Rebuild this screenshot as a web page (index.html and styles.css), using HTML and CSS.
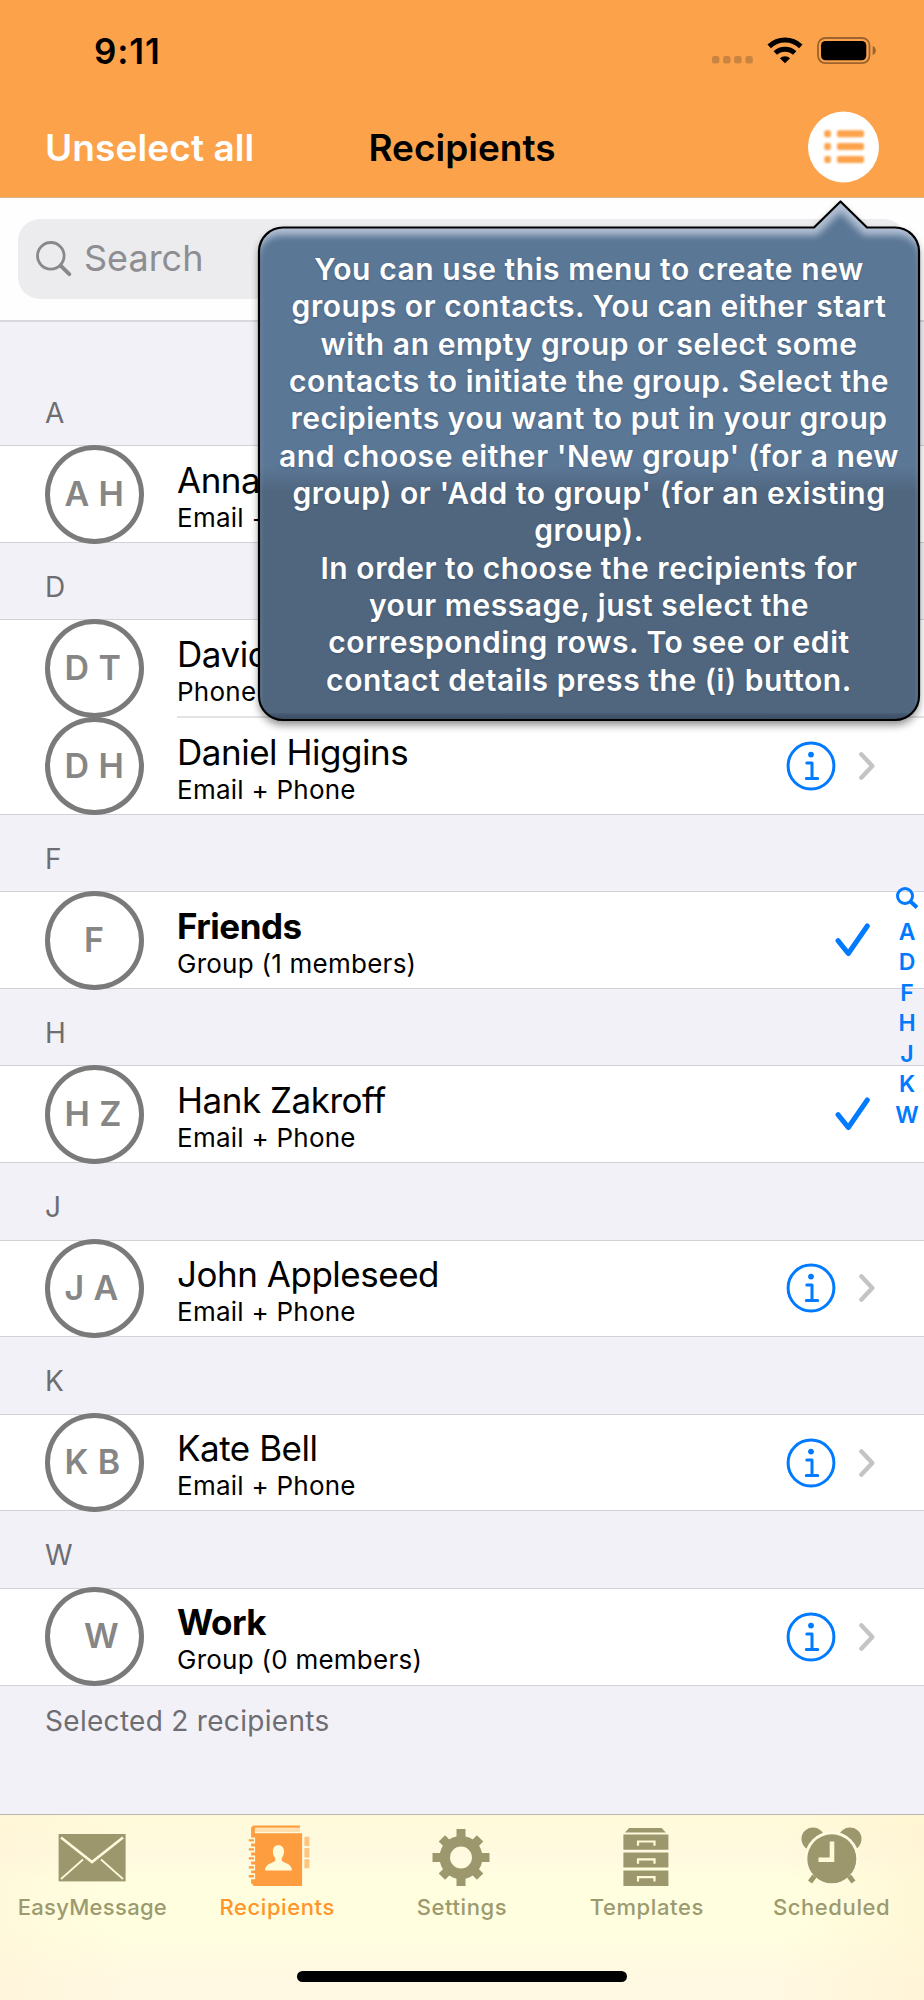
FILE: index.html
```html
<!DOCTYPE html>
<html lang="en">
<head>
<meta charset="utf-8">
<title>Recipients</title>
<link rel="stylesheet" href="styles.css">
</head>
<body>
<svg class="defs" width="0" height="0" aria-hidden="true">
  <symbol id="info" viewBox="0 0 50 50"><circle cx="25" cy="25" r="22.9" fill="none" stroke="#007aff" stroke-width="3"/><circle cx="25" cy="13.6" r="2.9" fill="#007aff"/><path d="M20.8 22H26v15.4M20.3 37.4h11.4" fill="none" stroke="#007aff" stroke-width="3" stroke-linecap="round" stroke-linejoin="round"/></symbol>
  <symbol id="chevron" viewBox="0 0 18 30"><path d="M3.3 3.3L14.3 15L3.3 26.7" fill="none" stroke="#c4c4c6" stroke-width="4.4" stroke-linecap="round" stroke-linejoin="round"/></symbol>
  <symbol id="check" viewBox="0 0 36 34"><path d="M3 17.6L13.3 30.5L32.3 3" fill="none" stroke="#007aff" stroke-width="5" stroke-linecap="round" stroke-linejoin="round"/></symbol>
</svg>
<div class="screen">
  <header class="top">
    <div class="status">
      <span class="time">9:11</span>
      <div class="signals">
        <svg class="dots" width="41" height="8" viewBox="0 0 41 8" fill="#c98540"><rect width="7.4" height="7.4" rx="2.2"/><rect x="11.1" width="7.4" height="7.4" rx="2.2"/><rect x="22.2" width="7.4" height="7.4" rx="2.2"/><rect x="33.4" width="7.4" height="7.4" rx="2.2"/></svg>
        <svg class="wifi" width="36" height="27" viewBox="0 0 36 27"><g fill="none" stroke="#000" stroke-width="5"><path d="M2.2 9.4A23 23 0 0 1 33.8 9.4"/><path d="M8.3 16A14.3 14.3 0 0 1 27.7 16"/></g><path d="M18 26.2L12.9 21.2A7.6 7.6 0 0 1 23.1 21.2Z"/></svg>
        <svg class="battery" width="60" height="28" viewBox="0 0 60 28"><rect x="1" y="1" width="51.5" height="25.2" rx="7.5" fill="none" stroke="#9b642f" stroke-width="1.8"/><rect x="4" y="4" width="45.3" height="19.2" rx="4.5"/><path d="M55.6 9q3.2 1.4 3.2 4.6t-3.2 4.6z" fill="#9b642f"/></svg>
      </div>
    </div>
    <nav class="nav">
      <span class="unselect">Unselect all</span>
      <h1 class="title">Recipients</h1>
      <svg class="menu" width="71" height="72" viewBox="0 0 71 72"><circle cx="35.5" cy="36" r="35.5" fill="#fff"/><g fill="#fca24b" class="soft"><rect x="16.3" y="19.3" width="6.6" height="7" rx="2"/><rect x="16.3" y="32.1" width="6.6" height="7" rx="2"/><rect x="16.3" y="45" width="6.6" height="7" rx="2"/><rect x="29" y="19.3" width="27" height="7" rx="2"/><rect x="29" y="32.1" width="27" height="7" rx="2"/><rect x="29" y="45" width="27" height="7" rx="2"/></g></svg>
    </nav>
  </header>
  <div class="searchbar">
    <div class="field">
      <svg width="38" height="38" viewBox="0 0 38 38" fill="none" stroke="#89898c" stroke-linecap="round"><circle cx="15.8" cy="15.8" r="13.3" stroke-width="2.8"/><path d="M25.6 25.6L34.3 34.2" stroke-width="4"/></svg>
      <span class="placeholder">Search</span>
    </div>
  </div>
  <main class="list">
    <h2 class="letter first">A</h2>
    <div class="group"><div class="row"><div class="avatar">A H</div><div class="who"><b class="name">Anna Haro</b><span class="sub">Email + Phone</span></div></div></div>
    <h2 class="letter">D</h2>
    <div class="group">
      <div class="row"><div class="avatar">D T</div><div class="who"><b class="name">David Taylor</b><span class="sub">Phone</span></div></div>
      <div class="row next"><div class="avatar">D H</div><div class="who"><b class="name">Daniel Higgins</b><span class="sub">Email + Phone</span></div><svg class="info"><use href="#info"/></svg><svg class="chevron"><use href="#chevron"/></svg></div>
    </div>
    <h2 class="letter">F</h2>
    <div class="group"><div class="row"><div class="avatar single">F</div><div class="who"><b class="name strong">Friends</b><span class="sub">Group (1 members)</span></div><svg class="check"><use href="#check"/></svg></div></div>
    <h2 class="letter">H</h2>
    <div class="group"><div class="row"><div class="avatar">H Z</div><div class="who"><b class="name">Hank Zakroff</b><span class="sub">Email + Phone</span></div><svg class="check"><use href="#check"/></svg></div></div>
    <h2 class="letter">J</h2>
    <div class="group"><div class="row"><div class="avatar">J A</div><div class="who"><b class="name">John Appleseed</b><span class="sub">Email + Phone</span></div><svg class="info"><use href="#info"/></svg><svg class="chevron"><use href="#chevron"/></svg></div></div>
    <h2 class="letter">K</h2>
    <div class="group"><div class="row"><div class="avatar">K B</div><div class="who"><b class="name">Kate Bell</b><span class="sub">Email + Phone</span></div><svg class="info"><use href="#info"/></svg><svg class="chevron"><use href="#chevron"/></svg></div></div>
    <h2 class="letter">W</h2>
    <div class="group"><div class="row"><div class="avatar single">W</div><div class="who"><b class="name strong">Work</b><span class="sub">Group (0 members)</span></div><svg class="info"><use href="#info"/></svg><svg class="chevron"><use href="#chevron"/></svg></div></div>
    <p class="selected">Selected 2 recipients</p>
  </main>
  <footer class="tabs">
    <div class="tab"><svg viewBox="0 0 80 68"><rect x="6.6" y="12" width="67" height="47.4" fill="#9c976c"/><g fill="none" stroke="#fffbdc"><path d="M9 15.5L40 40L71 15.5" stroke-width="2.6"/><path d="M9 57L31 37.5M71 57L49 37.5" stroke-width="1.7"/></g></svg><span class="tight">EasyMessage</span></div>
    <div class="tab active"><svg viewBox="-3.4 0 80 68"><path d="M13 3.4h46.5v2.4H14.5v5.4H61.7V64H13.5l-2.8-3V5.5z" fill="#fe9d3f"/><rect x="14.5" y="6.2" width="45" height="3.8" fill="#fee0b0"/><path d="M8.4 18.4h6.3M8.4 27.4h6.3M8.4 36.4h6.3M8.4 45.4h6.3M8.4 54.3h6.3" stroke="#fffcdc" stroke-width="6"/><path d="M8.4 18.4h5.2M8.4 27.4h5.2M8.4 36.4h5.2M8.4 45.4h5.2M8.4 54.3h5.2" stroke="#fe9d3f" stroke-width="2.4"/><path d="M38 23.2c3.8 0 5.6 2.5 5.6 6.3 0 3-1 5-2.3 6.3v3c2 2.2 9.9 2.6 10.3 9.7H24.6c.4-7.1 8.3-7.5 10.2-9.7v-3c-1.4-1.3-2.3-3.3-2.3-6.3 0-3.8 1.7-6.3 5.5-6.3z" fill="#fffcdc"/><path d="M64 14.8h5v9.2h-5zM64 26h5v9.5h-5zM64 37.2h5v9h-5z" fill="#fdc580"/></svg><span>Recipients</span></div>
    <div class="tab"><svg viewBox="0 0 80 68"><circle cx="39" cy="35.5" r="16.2" fill="none" stroke="#9c976c" stroke-width="10.5"/><g stroke="#9c976c" stroke-width="9"><path d="M39 7v8M39 56v8M10.5 35.5h8M59.5 35.5h8"/><path d="M39 8.5v7M39 55.5v7M12 35.5h7M59 35.5h7" transform="rotate(45 39 35.5)"/></g></svg><span>Settings</span></div>
    <div class="tab"><svg viewBox="0 0 80 68"><g fill="#9c976c"><path d="M22 6h32.5l4.5 4.500H18z"/><path d="M16.400 12.500h45V27.700h-45zM16.400 30.400h45v15.200h-45zM16.400 48.500h45V64h-45z"/></g><path d="M31 23.800v-4.300h16.500v4.300M31 41.700v-4.300h16.500v4.300M31 59.500v-4.300h16.500v4.300" fill="none" stroke="#fffbd8" stroke-width="2.200"/></svg><span>Templates</span></div>
    <div class="tab"><svg viewBox="0 0 80 68"><g fill="#9c976c"><circle cx="21" cy="17" r="11.500"/><circle cx="58" cy="17" r="11.500"/></g><circle cx="39.800" cy="36.800" r="27.300" fill="#fffce0"/><circle cx="39.800" cy="36.800" r="24.500" fill="#9c976c"/><path d="M22.500 54l-4.500 6M57 54l4.500 6" stroke="#9c976c" stroke-width="5"/><path d="M40 19.500v18.300H26.500" fill="none" stroke="#fffbd8" stroke-width="4.600"/></svg><span>Scheduled</span></div>
    <i class="home"></i>
  </footer>
  <div class="index"><svg width="24" height="24" viewBox="0 0 24 24" fill="none" stroke="#007aff"><circle cx="10" cy="10" r="7.500" stroke-width="3"/><path d="M15.500 15.500L22 21.500" stroke-width="4"/></svg><span>A</span><span>D</span><span>F</span><span>H</span><span>J</span><span>K</span><span>W</span></div>
  <div class="bubble">
    <svg class="shape" width="684" height="548" viewBox="0 0 684 548">
      <defs>
        <linearGradient id="fill" x1="0" y1="0" x2="0" y2="1"><stop offset="0" stop-color="#5b7796"/><stop offset=".51" stop-color="#5b7796"/><stop offset=".56" stop-color="#50667f"/><stop offset="1" stop-color="#50667f"/></linearGradient>
        <clipPath id="inside"><path d="M34 37.500H565L591.500 11.500L618 37.500H646A24 24 0 0 1 670 61V506A24 24 0 0 1 646 530H34A24 24 0 0 1 10 506V61A24 24 0 0 1 34 37.500Z"/></clipPath>
        <filter id="glow" x="-5%" y="-5%" width="110%" height="110%"><feGaussianBlur stdDeviation="3.500"/></filter>
        <filter id="drop" x="-5%" y="-5%" width="110%" height="110%"><feGaussianBlur stdDeviation="4"/></filter>
      </defs>
      <path transform="translate(0 5)" filter="url(#drop)" opacity=".45" d="M34 37.500H565L591.500 11.500L618 37.500H646A24 24 0 0 1 670 61V506A24 24 0 0 1 646 530H34A24 24 0 0 1 10 506V61A24 24 0 0 1 34 37.500Z"/>
      <path fill="url(#fill)" d="M34 37.500H565L591.500 11.500L618 37.500H646A24 24 0 0 1 670 61V506A24 24 0 0 1 646 530H34A24 24 0 0 1 10 506V61A24 24 0 0 1 34 37.500Z"/>
      <g clip-path="url(#inside)"><path filter="url(#glow)" fill="#c9d3e4" fill-rule="evenodd" opacity=".8" d="M-20-20H704V560H-20ZM34 45H568L591.500 22L615 45H646A24 24 0 0 1 672 69V560H8V69A24 24 0 0 1 34 45Z"/><path filter="url(#glow)" d="M0 525H684V548H0Z" fill="#2c3a4c" opacity=".6"/></g>
      <path fill="none" stroke="#000" stroke-width="2.200" stroke-linejoin="round" d="M34 37.500H565L591.500 11.500L618 37.500H646A24 24 0 0 1 670 61V506A24 24 0 0 1 646 530H34A24 24 0 0 1 10 506V61A24 24 0 0 1 34 37.500Z"/>
    </svg>
    <p class="tip">You can use this menu to create new<br>groups or contacts. You can either start<br>with an empty group or select some<br>contacts to initiate the group. Select the<br>recipients you want to put in your group<br>and choose either 'New group' (for a new<br>group) or 'Add to group' (for an existing<br>group).<br>In order to choose the recipients for<br>your message, just select the<br>corresponding rows. To see or edit<br>contact details press the (i) button.</p>
  </div>
</div>
</body>
</html>
```
FILE: styles.css
```css
* { box-sizing: border-box; }
body { margin: 0; font-family: Inter, "Liberation Sans", sans-serif; color: #000; background: #f2f1f7; }
svg { display: block; flex: none; }
.defs { position: absolute; }
.screen { position: relative; width: 924px; height: 2000px; display: flex; flex-direction: column; overflow: hidden; background: #f2f1f7; }

.top { height: 198px; flex: none; background: #fca24b; border-bottom: 1px solid #dcb48c; }
.status { height: 97px; padding: 0 48px 0 94px; display: flex; justify-content: space-between; }
.time { font-size: 35px; line-height: 40px; font-weight: 600; padding-top: 31px; letter-spacing: 0.9px; }
.signals { display: flex; align-items: flex-start; padding-top: 37px; }
.dots { margin-top: 19px; }
.wifi { margin-left: 14px; }
.battery { margin-left: 14px; margin-right: -1px; }
.nav { height: 100px; padding: 0 45px; display: grid; grid-template-columns: 1fr auto 1fr; align-items: center; white-space: nowrap; }
.unselect { color: #fff; font-size: 37px; font-weight: 560; letter-spacing: 0.1px; }
.title { margin: 0; font-size: 37px; font-weight: 560; letter-spacing: 0; }
.menu { justify-self: end; }
.soft { filter: blur(0.8px); }

.searchbar { height: 124px; flex: none; background: #fefefe; border-bottom: 2px solid #d9d8de; padding: 21px 18px; }
.field { height: 80px; border-radius: 22px; background: #ececee; display: flex; align-items: center; padding-left: 17px; }
.placeholder { font-size: 36px; color: #8e8e92; margin-left: 11px; letter-spacing: 0; padding-bottom: 2px; }

.list { flex: 1; min-height: 0; }
.letter { margin: 0; height: 76.3px; padding: 27px 0 0 45px; font-size: 28px; line-height: 34px; font-weight: 400; color: #6d6d72; }
.letter.first { height: 123.4px; padding-top: 74px; }
.group { background: #fff; box-shadow: inset 0 1px #d2d2d6, inset 0 -1px #d2d2d6; }
.row { height: 97.8px; display: flex; align-items: center; padding: 0 48px 0 45px; position: relative; }
.row.next::before { content: ""; position: absolute; top: -1px; left: 177px; right: 0; height: 2px; background: #e3e3e6; }
.avatar { flex: none; width: 99px; height: 98.5px; border: 5px solid #7a7a7a; border-radius: 50%; padding: 0 0 2px 14.5px; font-size: 34px; font-weight: 560; color: #868686; display: flex; align-items: center; white-space: pre; letter-spacing: 0.4px; }
.avatar.single { padding-left: 34px; }
.who { flex: 1; padding: 5px 0 0 33px; white-space: nowrap; }
.name { display: block; font-size: 35px; line-height: 40px; font-weight: 400; letter-spacing: -0.48px; }
.name.strong { font-weight: 680; letter-spacing: -0.5px; }
.sub { display: block; font-size: 26px; line-height: 32px; padding-top: 2px; letter-spacing: 0.25px; }
.info { width: 50px; height: 50px; margin-right: 22px; }
.chevron { width: 18px; height: 30px; }
.check { width: 36px; height: 34px; margin-right: 5px; }
.selected { margin: 0; padding: 18px 0 0 45px; font-size: 28px; line-height: 34px; color: #6d6d72; letter-spacing: 0.3px; }

.tabs { position: relative; flex: none; height: 186px; border-top: 1px solid #b8b7b5; background: linear-gradient(90deg, rgba(255,240,210,.4), rgba(255,240,215,0) 14%, rgba(255,240,215,0) 84%, rgba(255,240,205,.5)), linear-gradient(#fffbd9, #fff9e0 22%, #ffffe0 34%, #ffffe0 62%, #fff8e2 90%); display: grid; grid-template-columns: repeat(5, 1fr); }
.tab { display: flex; flex-direction: column; align-items: center; padding-top: 7px; color: #9c9a6e; font-size: 22px; font-weight: 480; }
.tab svg { width: 80px; height: 68px; }
.tab span { margin-top: 4px; line-height: 27px; letter-spacing: 0.6px; }
.tab .tight { letter-spacing: 0.3px; }
.tab.active { color: #ff9429; }
.home { position: absolute; left: 297px; top: 156px; width: 330px; height: 11px; border-radius: 6px; background: #000; }

.index { position: absolute; right: 4.5px; top: 886px; width: 25px; display: flex; flex-direction: column; align-items: center; color: #007aff; font-size: 23px; font-weight: 580; line-height: 30.5px; }
.index svg { margin-bottom: 6.5px; }

.bubble { position: absolute; left: 249px; top: 190px; width: 684px; }
.shape { position: absolute; left: 0; top: 0; }
.tip { position: relative; margin: 0; padding-top: 61px; width: 680px; text-align: center; color: #fff; font-size: 30px; line-height: 37.33px; font-weight: 580; letter-spacing: 0.55px; white-space: nowrap; text-shadow: 0 1px 2px rgba(30,45,65,.3); }
```
